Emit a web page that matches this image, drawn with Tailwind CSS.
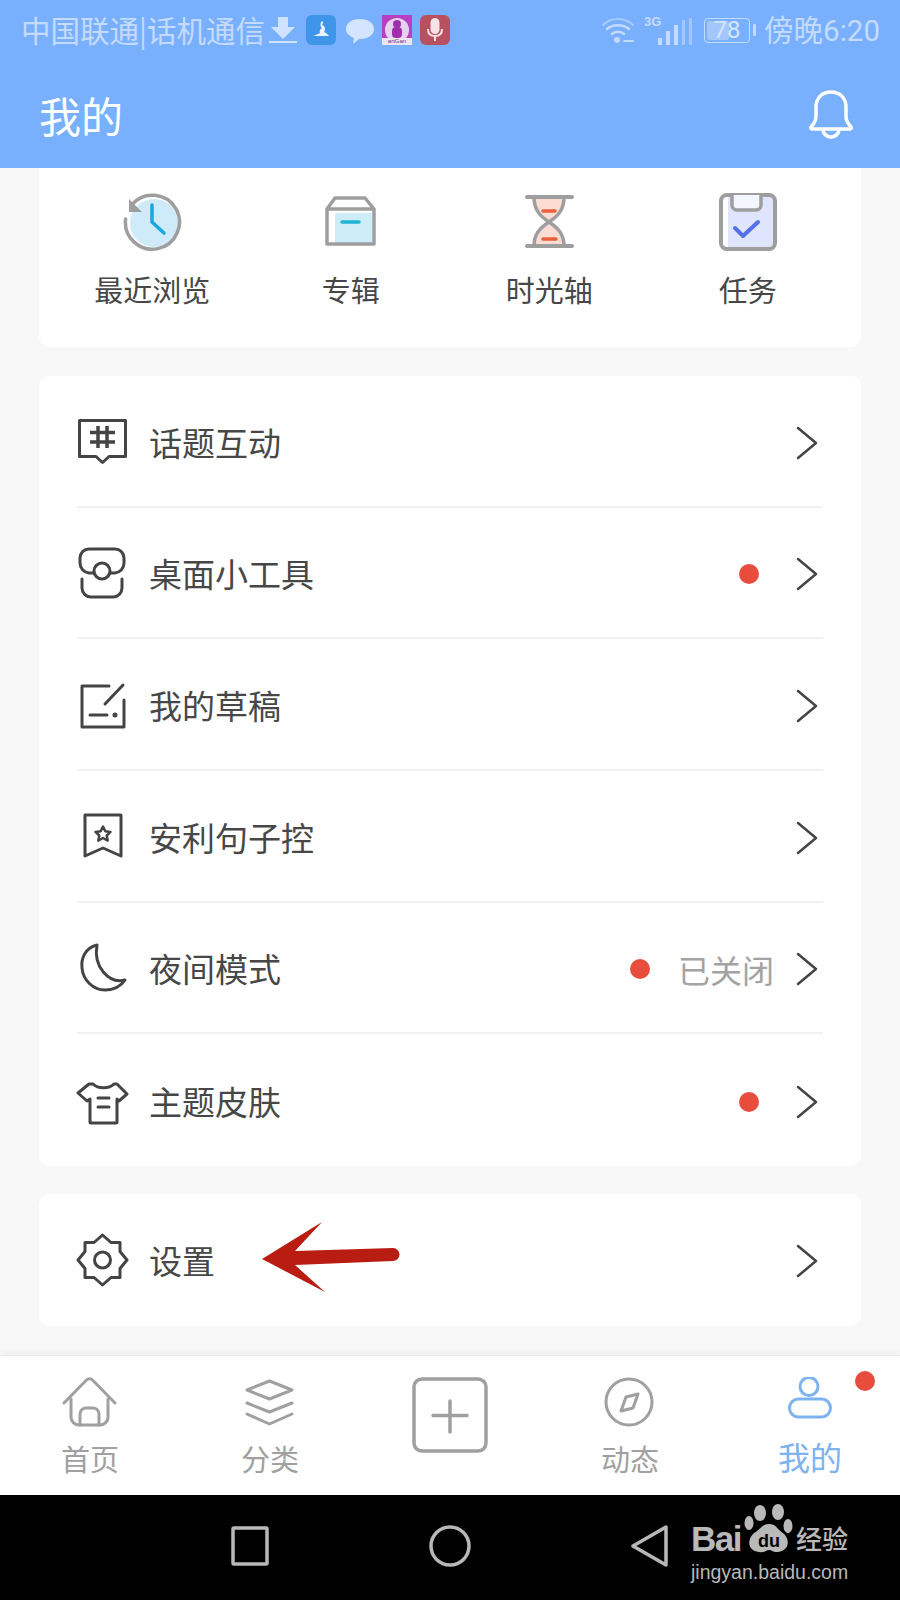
<!DOCTYPE html>
<html lang="zh-CN">
<head>
<meta charset="UTF-8">
<meta name="viewport" content="width=device-width, initial-scale=1.0">
<title>我的</title>
<script src="https://cdn.jsdelivr.net/npm/@tailwindcss/browser@4"></script>
</head>
<body class="bg-[#f8f8f8]">
<div class="relative w-[900px] h-[1600px] overflow-hidden flex flex-col font-['Noto_Sans_CJK_SC','Noto_Sans',sans-serif] text-[#474747]">

  <!-- header -->
  <header class="h-[168px] bg-[#79b0fe] shrink-0">
    <div class="h-[60px] flex items-center pl-[21px] pr-[20px] text-[#c4dbff] text-[29.5px] leading-none">
      <span>中国联通|话机通信</span>
      <svg class="ml-[4px]" width="28" height="30" viewBox="0 0 28 30" fill="#cfe2ff"><path d="M9 2h10v10h7L14 24 2 12h7z"/><rect x="0" y="26" width="28" height="2"/></svg>
      <div class="ml-[9px] w-[30px] h-[30px] rounded-[6px] bg-[#3f95ea] flex items-center justify-center">
        <svg width="22" height="22" viewBox="0 0 22 22" fill="#e8f3ff"><path d="M12 2c2 1 1 3 0 4 3 1 4 4 2 7 2 1 4 2 5 4H3c3-1 5-2 7-3-1-2 0-4 2-5-2-1-2-5 0-7z"/></svg>
      </div>
      <svg class="ml-[9px]" width="30" height="30" viewBox="0 0 30 30" fill="#d3e5ff"><path d="M15 4c8 0 14 4 14 10s-6 10-14 10h-1l-6 5 1-6C4 21 1 18 1 14 1 8 7 4 15 4z"/></svg>
      <div class="ml-[7px] w-[30px] h-[30px] bg-[#b83fc0] relative overflow-hidden">
        <div class="absolute left-[3px] top-[3px] w-[24px] h-[24px] rounded-full bg-[#e4d2ee]"></div>
        <div class="absolute left-[11px] top-[5px] w-[8px] h-[8px] rounded-full bg-[#a02fae]"></div>
        <div class="absolute left-[10px] top-[12px] w-[10px] h-[11px] rounded-[4px] bg-[#a02fae]"></div>
        <div class="absolute left-0 bottom-0 w-full h-[7px] bg-[#ece4ef] text-[6px] leading-[7px] text-center text-[#7a2c8a] font-['Liberation_Sans',sans-serif]">artGan</div>
      </div>
      <div class="ml-[8px] w-[30px] h-[30px] rounded-[6px] bg-[#b8505f] flex items-center justify-center">
        <svg width="20" height="24" viewBox="0 0 20 24" fill="none" stroke="#f6e3e6" stroke-width="2"><rect x="6.500" y="1" width="7" height="14" rx="3.500" fill="#f6e3e6"/><path d="M3 11c0 5 3 7 7 7s7-2 7-7M10 18v5"/></svg>
      </div>
      <div class="flex-1"></div>
      <svg width="34" height="30" viewBox="0 0 34 30" fill="none" stroke="#c4dbff" stroke-linecap="round"><path d="M2 10c8-8 22-8 30 0" stroke-width="2" opacity=".6"/><path d="M6 14c6-5 16-5 22 0" stroke-width="2.500"/><path d="M11 19c3-3 9-3 12 0" stroke-width="2.500"/><circle cx="16" cy="25" r="3" fill="#c4dbff" stroke="none"/><path d="M23 26h9" stroke-width="2"/></svg>
      <div class="ml-[9px] relative w-[44px] h-[30px]">
        <span class="absolute left-0 top-0 text-[13px] font-bold leading-none font-['Liberation_Sans',sans-serif]">3G</span>
        <div class="absolute left-[14px] bottom-0 flex items-end gap-[4px]">
          <i class="block w-[4px] h-[7px] bg-[#c4dbff]"></i><i class="block w-[4px] h-[14px] bg-[#c4dbff]"></i><i class="block w-[4px] h-[20px] bg-[#c4dbff]"></i><i class="block w-[3px] h-[25px] bg-[#a3c7fd]"></i><i class="block w-[3px] h-[27px] bg-[#a3c7fd]"></i>
        </div>
      </div>
      <div class="ml-[16px] relative w-[46px] h-[25px] rounded-[4px] border border-[#c4dbff] flex items-center justify-center text-[24px] leading-none">
        <div class="absolute left-[2px] top-[2px] bottom-[2px] w-[22px] bg-[#a3c7fd] rounded-[2px]"></div>
        <span class="relative font-['Roboto',sans-serif] text-[#d5e5ff]">78</span>
      </div>
      <div class="ml-[3px] w-[3px] h-[12px] bg-[#c4dbff] rounded-[1px]"></div>
      <span class="ml-[8px]">傍晚<span class="font-['Roboto',sans-serif]">6:20</span></span>
    </div>
    <div class="h-[108px] flex items-center justify-between pl-[39px] pr-[46px]">
      <h1 class="mt-[2px] text-[42px] leading-none text-white font-normal">我的</h1>
      <svg width="46" height="50" viewBox="0 0 46 50" fill="none" stroke="#fff" stroke-width="3.500" stroke-linejoin="round"><path d="M3 38c3-3 5-6 5-11V18C8 9 14 3 23 3s15 6 15 15v9c0 5 2 8 5 11 1 1 0 2-1 2H4c-1 0-2-1-1-2z"/><path d="M15 40c0 5 4 8 8 8s8-3 8-8"/></svg>
    </div>
  </header>

  <main class="flex-1 px-[39px] flex flex-col">
    <!-- shortcuts -->
    <section class="h-[179px] bg-white rounded-b-[10px] px-[14px] pt-[24px] grid grid-cols-4">
      <div class="flex flex-col items-center">
        <svg width="60" height="60" viewBox="0 0 60 60" fill="none" stroke-linecap="round"><circle cx="32" cy="31" r="24" fill="#cfeaf9"/><path d="M3.600 27A27 27 0 1 0 10 12.500" stroke="#9e9e9e" stroke-width="3.500"/><path d="M7 7v13h13z" fill="#9e9e9e"/><path d="M30 13v17l12 11" stroke="#1ba6e4" stroke-width="3.500"/></svg>
        <span class="mt-[19px] text-[29px] leading-[36px]">最近浏览</span>
      </div>
      <div class="flex flex-col items-center">
        <svg width="60" height="60" viewBox="0 0 60 60" fill="none" stroke-linecap="round" stroke-linejoin="round"><path d="M14 21h37v30H14z" fill="#cdeef8"/><path d="M6 17L14 6h30l9 11v35H6zM6 17h47" stroke="#9e9e9e" stroke-width="3.500"/><path d="M21 30h17" stroke="#1fb4d8" stroke-width="3.500"/></svg>
        <span class="mt-[19px] text-[29px] leading-[36px]">专辑</span>
      </div>
      <div class="flex flex-col items-center">
        <svg width="60" height="60" viewBox="0 0 60 60" fill="none" stroke-linecap="round" stroke-linejoin="round"><path d="M15 5h30c0 13-6 19-15 25 9 6 15 12 15 24H15c0-12 6-18 15-24-9-6-15-12-15-25z" fill="#fbdcd2"/><path d="M8 5h45M8 54h45" stroke="#9e9e9e" stroke-width="4"/><path d="M15 5c0 13 6 19 15 25 9-6 15-12 15-25M15 54c0-12 6-18 15-24 9 6 15 12 15 24" stroke="#9e9e9e" stroke-width="3.500"/><path d="M24 19h12M24 47h13" stroke="#e8603c" stroke-width="3.500"/></svg>
        <span class="mt-[19px] text-[29px] leading-[36px]">时光轴</span>
      </div>
      <div class="flex flex-col items-center">
        <svg width="60" height="60" viewBox="0 0 60 60" fill="none" stroke-linecap="round" stroke-linejoin="round"><rect x="10" y="3" width="47" height="54" fill="#dfe5fd"/><rect x="3" y="3" width="54" height="54" rx="6" stroke="#9e9e9e" stroke-width="4"/><path d="M14 3v10a5 5 0 0 0 5 5h19a5 5 0 0 0 5-5V3" fill="#f4f6ff" stroke="#9e9e9e" stroke-width="3.500"/><path d="M17 36l8 8 15-14" stroke="#5570e8" stroke-width="4"/></svg>
        <span class="mt-[19px] text-[29px] leading-[36px]">任务</span>
      </div>
    </section>

    <!-- list -->
    <section class="mt-[29px] h-[790px] bg-white rounded-[10px] px-[38px] flex flex-col">
      <div class="h-[131.500px] pt-[3px] flex items-center border-b-2 border-[#f1f1f1]">
        <svg class="-ml-[1px]" width="54" height="54" viewBox="0 0 54 54" fill="none" stroke="#444" stroke-width="3" stroke-linejoin="round"><path d="M3.500 5.500h46v36H33l-6.500 6-6.500-6H3.500z"/><path d="M22 11v22M31 11v22M14 17.500h25M14 27h25" stroke-width="3.500"/></svg>
        <span class="ml-[19px] text-[33px] leading-none">话题互动</span>
        <div class="flex-1"></div>
        <svg class="mr-[4px] mt-[1px]" width="24" height="34" viewBox="0 0 24 34" fill="none" stroke="#444" stroke-width="2.500" stroke-linecap="round" stroke-linejoin="round"><path d="M3 2l18 15L3 32"/></svg>
      </div>
      <div class="h-[131.700px] pt-[3px] flex items-center border-b-2 border-[#f1f1f1]">
        <svg class="-ml-[1px]" width="54" height="54" viewBox="0 0 54 54" fill="none" stroke="#444" stroke-width="3" stroke-linecap="round"><circle cx="26" cy="24" r="8"/><path d="M17.500 26H13a10 10 0 0 1-9-10v-5a9 9 0 0 1 9-9h26a9 9 0 0 1 9 9v5a10 10 0 0 1-9 10h-4.500"/><path d="M6 32v9a9 9 0 0 0 9 9h22a9 9 0 0 0 9-9v-9"/></svg>
        <span class="ml-[19px] text-[33px] leading-none">桌面小工具</span>
        <div class="flex-1"></div>
        <i class="block w-[20px] h-[20px] rounded-full bg-[#e74c3c] mr-[36px]"></i>
        <svg class="mr-[4px] mt-[1px]" width="24" height="34" viewBox="0 0 24 34" fill="none" stroke="#444" stroke-width="2.500" stroke-linecap="round" stroke-linejoin="round"><path d="M3 2l18 15L3 32"/></svg>
      </div>
      <div class="h-[131.700px] pt-[3px] flex items-center border-b-2 border-[#f1f1f1]">
        <svg class="-ml-[1px]" width="54" height="54" viewBox="0 0 54 54" fill="none" stroke="#444" stroke-width="3" stroke-linecap="round" stroke-linejoin="round"><path d="M33 7H6v41h42V21"/><path d="M47 6L29 25M14 36h17"/><circle cx="39" cy="36" r="1" fill="#444"/></svg>
        <span class="ml-[19px] text-[33px] leading-none">我的草稿</span>
        <div class="flex-1"></div>
        <svg class="mr-[4px] mt-[1px]" width="24" height="34" viewBox="0 0 24 34" fill="none" stroke="#444" stroke-width="2.500" stroke-linecap="round" stroke-linejoin="round"><path d="M3 2l18 15L3 32"/></svg>
      </div>
      <div class="h-[131.700px] pt-[3px] flex items-center border-b-2 border-[#f1f1f1]">
        <svg class="-ml-[1px]" width="54" height="54" viewBox="0 0 54 54" fill="none" stroke="#444" stroke-width="3" stroke-linejoin="round"><path d="M9 5h36v41l-18-8-18 8z"/><path d="M27 16.500l2.300 4.700 5.200.7-3.800 3.600 1 5.100L27 28l-4.700 2.600 1-5.100-3.800-3.600 5.200-.7z" stroke-width="2.500"/></svg>
        <span class="ml-[19px] text-[33px] leading-none">安利句子控</span>
        <div class="flex-1"></div>
        <svg class="mr-[4px] mt-[1px]" width="24" height="34" viewBox="0 0 24 34" fill="none" stroke="#444" stroke-width="2.500" stroke-linecap="round" stroke-linejoin="round"><path d="M3 2l18 15L3 32"/></svg>
      </div>
      <div class="h-[131.700px] pt-[3px] flex items-center border-b-2 border-[#f1f1f1]">
        <svg class="-ml-[1px]" width="54" height="54" viewBox="0 0 54 54" fill="none" stroke="#444" stroke-width="3" stroke-linejoin="round"><path d="M21 3C8 6 5 18 6 26 7 38 17 48 29 48 38 48 45 44 49 38 33 42 17 25 21 3z"/></svg>
        <span class="ml-[19px] text-[33px] leading-none">夜间模式</span>
        <div class="flex-1"></div>
        <i class="block w-[20px] h-[20px] rounded-full bg-[#e74c3c] mr-[28px]"></i>
        <span class="text-[32px] leading-none text-[#a3a3a3] mr-[21px]">已关闭</span>
        <svg class="mr-[4px] mt-[1px]" width="24" height="34" viewBox="0 0 24 34" fill="none" stroke="#444" stroke-width="2.500" stroke-linecap="round" stroke-linejoin="round"><path d="M3 2l18 15L3 32"/></svg>
      </div>
      <div class="flex-1 pt-[3px] flex items-center">
        <svg class="-ml-[1px]" width="54" height="54" viewBox="0 0 54 54" fill="none" stroke="#444" stroke-width="3" stroke-linecap="round" stroke-linejoin="round"><path d="M17 9c5 5 16 5 21 0h3l10 10-8 7-2-2v23a1 1 0 0 1-1 1H15a1 1 0 0 1-1-1V24l-3 2-9-8 11-9z"/><path d="M22 23h11M22 32h11"/></svg>
        <span class="ml-[19px] text-[33px] leading-none">主题皮肤</span>
        <div class="flex-1"></div>
        <i class="block w-[20px] h-[20px] rounded-full bg-[#e74c3c] mr-[36px]"></i>
        <svg class="mr-[4px] mt-[1px]" width="24" height="34" viewBox="0 0 24 34" fill="none" stroke="#444" stroke-width="2.500" stroke-linecap="round" stroke-linejoin="round"><path d="M3 2l18 15L3 32"/></svg>
      </div>
    </section>

    <!-- settings -->
    <section class="mt-[28px] h-[132px] bg-white rounded-[10px] px-[38px] flex items-center">
      <svg class="-ml-[1px]" width="54" height="54" viewBox="0 0 54 54" fill="none" stroke="#444" stroke-width="3" stroke-linejoin="round"><path d="M26.500 2L35 9.500h9v9l7 8.500-7 8.500v9h-9L26.500 52 18 44.500H9v-9L2 27l7-8.500v-9h9z"/><circle cx="26.500" cy="27" r="8"/></svg>
      <span class="ml-[19px] text-[33px] leading-none">设置</span>
      <div class="flex-1"></div>
      <svg class="mr-[4px] mt-[1px]" width="24" height="34" viewBox="0 0 24 34" fill="none" stroke="#444" stroke-width="2.500" stroke-linecap="round" stroke-linejoin="round"><path d="M3 2l18 15L3 32"/></svg>
    </section>
  </main>

  <!-- tab bar -->
  <nav class="h-[140px] shrink-0 bg-white border-t border-[#ececec] shadow-[0_-3px_6px_rgba(0,0,0,0.04)] grid grid-cols-5 pt-[21px] text-[#a0a0a0] relative">
    <div class="flex flex-col items-center">
      <svg width="60" height="50" viewBox="0 0 60 50" fill="none" stroke="#a0a0a0" stroke-width="3" stroke-linecap="round" stroke-linejoin="round"><path d="M4 26L26.500 3a4 4 0 0 1 6 0L55 26"/><path d="M11 22v18a8 8 0 0 0 8 8h21a8 8 0 0 0 8-8V22"/><path d="M20 48V37a6 6 0 0 1 6-6h7a6 6 0 0 1 6 6v11"/></svg>
      <span class="mt-[13px] text-[29px] leading-[36px]">首页</span>
    </div>
    <div class="flex flex-col items-center">
      <svg width="60" height="50" viewBox="0 0 60 50" fill="none" stroke="#a0a0a0" stroke-width="3" stroke-linecap="round" stroke-linejoin="round"><path d="M29.500 4L52 13 29.500 22 7 13z"/><path d="M7 26l22.500 9L52 26M7 37l22.500 10L52 37"/></svg>
      <span class="mt-[13px] text-[29px] leading-[36px]">分类</span>
    </div>
    <div class="flex flex-col items-center">
      <svg width="76" height="76" viewBox="0 0 76 76" fill="none" stroke="#a0a0a0" stroke-linecap="round"><rect x="2" y="2" width="72" height="72" rx="8" stroke-width="3.500"/><path d="M38 24v31M21 38.500h34" stroke-width="3.500"/></svg>
    </div>
    <div class="flex flex-col items-center">
      <svg width="60" height="50" viewBox="0 0 60 50" fill="none" stroke="#a0a0a0" stroke-width="3" stroke-linejoin="round"><circle cx="29" cy="25" r="23"/><path d="M38 17L33 31 21 34 26 20z"/></svg>
      <span class="mt-[13px] text-[29px] leading-[36px]">动态</span>
    </div>
    <div class="relative flex flex-col items-center text-[#7db3f0]">
      <svg width="60" height="50" viewBox="0 0 60 50" fill="none" stroke="#7db3f0" stroke-width="3"><circle cx="29" cy="9.500" r="9"/><rect x="9.500" y="22" width="41" height="18" rx="9"/></svg>
      <span class="mt-[10px] text-[32px] leading-[38px]">我的</span>
      <i class="absolute left-[135px] top-[-6px] w-[20px] h-[20px] rounded-full bg-[#e74c3c]"></i>
    </div>
  </nav>

  <!-- system nav -->
  <div class="h-[105px] shrink-0 bg-black flex items-center pb-[4px]">
    <svg class="ml-[231px]" width="38" height="40" viewBox="0 0 38 40" fill="none" stroke="#b8b8b8" stroke-width="3.500" stroke-linejoin="round"><rect x="2" y="2" width="34" height="36" rx="1"/></svg>
    <svg class="ml-[160px]" width="42" height="42" viewBox="0 0 42 42" fill="none" stroke="#b8b8b8" stroke-width="3.500"><circle cx="21" cy="21" r="19"/></svg>
    <svg class="ml-[160px]" width="38" height="42" viewBox="0 0 38 42" fill="none" stroke="#b8b8b8" stroke-width="3.500" stroke-linejoin="round"><path d="M35 2v38L2 21z"/></svg>
  </div>

  <!-- red annotation arrow -->
  <svg class="absolute left-[260px] top-[1220px]" width="140" height="74" viewBox="0 0 140 74" fill="#b91c10"><path d="M2 39L62 2 35 31 133 28a6.500 6.500 0 0 1 0 13L35 45 65 72z"/></svg>

  <!-- watermark -->
  <div class="absolute left-[690px] top-[1503px] w-[165px] h-[86px] text-[#b9b9b9]">
    <svg class="absolute left-[54px] top-[1px]" width="50" height="50" viewBox="0 0 50 50" fill="#b9b9b9"><ellipse cx="16" cy="9" rx="6" ry="8"/><ellipse cx="34" cy="8" rx="6" ry="8"/><ellipse cx="5" cy="19" rx="4.500" ry="7"/><ellipse cx="44" cy="22" rx="4.500" ry="7"/><path d="M25 20c7 0 8 5 14 9 7 5 7 18-5 19-5 .5-6-2-9-2s-4 3-10 2C3 47 3 35 10 29c7-4 8-9 15-9z"/></svg>
    <span class="absolute left-[68px] top-[27px] text-[18px] leading-[22px] font-bold text-black font-['Liberation_Sans',sans-serif]">du</span>
    <span class="absolute left-[1px] top-[19px] text-[35px] leading-[34px] font-bold font-['Liberation_Sans',sans-serif] tracking-[-1.5px]">Bai</span>
    <span class="absolute left-[106px] top-[20px] text-[26px] leading-[30px] font-medium whitespace-nowrap">经验</span>
    <span class="absolute left-[1px] top-[56px] text-[19.5px] leading-[26px] font-['Liberation_Sans',sans-serif] whitespace-nowrap">jingyan.baidu.com</span>
  </div>
</div>
</body>
</html>
